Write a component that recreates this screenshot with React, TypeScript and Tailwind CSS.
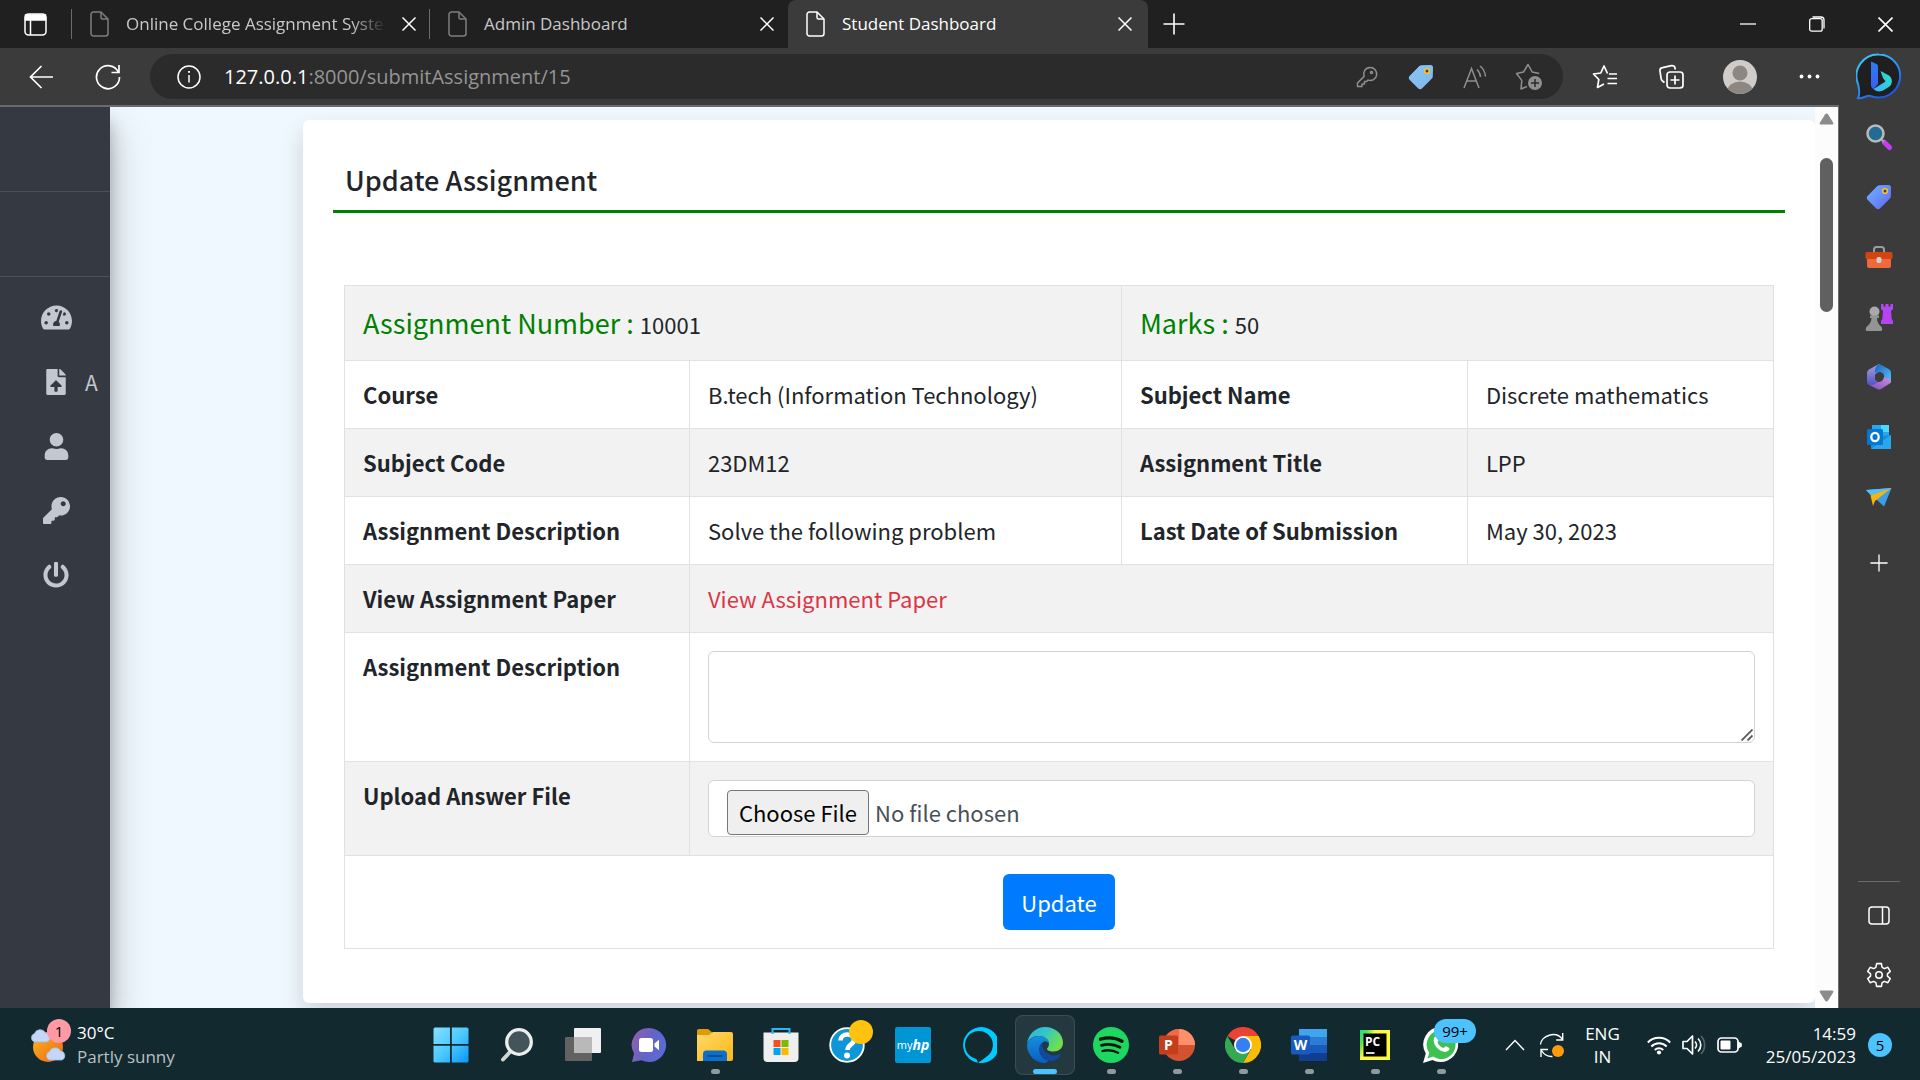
import React, { useId } from "react";
import { FaTachometerAlt, FaFileUpload, FaUser, FaKey, FaPowerOff } from "react-icons/fa";

type Children = { children?: React.ReactNode };

/* ---------- browser icons ---------- */

function DocIcon() {
  return (
    <svg width="20" height="26" viewBox="0 0 20 26" fill="none" stroke="currentColor" strokeWidth="1.5" strokeLinejoin="round">
      <path d="M3 1h8l7 7v14.500a2.500 2.500 0 0 1-2.500 2.500H3.500A2.500 2.500 0 0 1 1 22.500V3.500A2.500 2.500 0 0 1 3.500 1z" />
      <path d="M11 1v5.500A1.500 1.500 0 0 0 12.500 8H18" />
    </svg>
  );
}

function CrossIcon({ size = 14 }: { size?: number }) {
  return (
    <svg width={size} height={size} viewBox="0 0 14 14" stroke="currentColor" strokeWidth="1.5" fill="none">
      <path d="M.5.5l13 13M13.500.5l-13 13" />
    </svg>
  );
}

function PlusIcon({ size = 22 }: { size?: number }) {
  return (
    <svg width={size} height={size} viewBox="0 0 22 22" stroke="currentColor" strokeWidth="1.600" fill="none">
      <path d="M11 .5v21M.5 11h21" />
    </svg>
  );
}

function TagIcon({ from, to }: { from: string; to: string }) {
  const id = useId();
  return (
    <svg width="26" height="26" viewBox="0 0 26 26">
      <defs>
        <linearGradient id={id} x1="0" y1="0" x2="1" y2="1">
          <stop offset="0" stopColor={from} />
          <stop offset="1" stopColor={to} />
        </linearGradient>
      </defs>
      <path d="M13.500 1.200 22.500 1a2.500 2.500 0 0 1 2.500 2.500l-.2 9a3 3 0 0 1-.9 2.100L14.200 24.200a3 3 0 0 1-4.200 0L1.800 16a3 3 0 0 1 0-4.200l9.600-9.700a3 3 0 0 1 2.100-.9z" fill={`url(#${id})`} />
      <circle cx="19" cy="7" r="2.300" fill="#3a3f6b" stroke="#ffc41a" strokeWidth="1.600" />
    </svg>
  );
}

function BingIcon() {
  return (
    <svg width="46" height="48" viewBox="0 0 46 48">
      <defs>
        <linearGradient id="bing-ring" x1="0" y1="0" x2="0.600" y2="1">
          <stop offset="0" stopColor="#35d6f5" />
          <stop offset=".5" stopColor="#2f9bf3" />
          <stop offset="1" stopColor="#1b57e8" />
        </linearGradient>
        <linearGradient id="bing-stem" x1="0" y1="0" x2="0" y2="1">
          <stop offset="0" stopColor="#2c7df5" />
          <stop offset="1" stopColor="#3c5df0" />
        </linearGradient>
        <linearGradient id="bing-bowl" x1="1" y1="0" x2="0" y2="1">
          <stop offset="0" stopColor="#2fe0c4" />
          <stop offset="1" stopColor="#36b4ff" />
        </linearGradient>
      </defs>
      <path d="M23 1.500a21.500 21.500 0 1 1-8 41.600c-4-1.500-8 2.800-13 2.200 2.500-5 1-8.500.2-14A21.500 21.500 0 0 1 23 1.500z" fill="#1f1f1f" stroke="url(#bing-ring)" strokeWidth="2" />
      <path d="M15 8.500l5.500 2.500c1 .5 1.500 1.200 1.500 2.500V31l-4.500 5c-1.500-.5-2.500-2-2.500-4z" fill="url(#bing-stem)" />
      <path d="M24.500 18l8.500 4.500c4 3 3.500 8.500.5 11l-6 3.700c-3 1.700-7.500 1.800-10-1.200l12-7.500-2.500-3.500z" fill="url(#bing-bowl)" />
    </svg>
  );
}

function AvatarIcon() {
  return (
    <svg width="34" height="34" viewBox="0 0 34 34">
      <clipPath id="avatar-clip"><circle cx="17" cy="17" r="17" /></clipPath>
      <g clipPath="url(#avatar-clip)">
        <rect width="34" height="34" fill="#cfccc9" />
        <circle cx="17" cy="13" r="7.500" fill="#8c8783" />
        <ellipse cx="17" cy="31" rx="12.500" ry="9.500" fill="#8c8783" />
      </g>
    </svg>
  );
}

/* ---------- frame parts ---------- */

function Tab({ title, active, fade }: { title: string; active?: boolean; fade?: boolean }) {
  return (
    <div
      className={
        active
          ? "flex h-full w-[360px] items-center rounded-t-lg bg-[#3b3b3b] pr-4 pl-[18px] text-white"
          : "flex h-full w-[358px] items-center pr-[14px] pl-[18px] text-[#7e7e7e]"
      }
    >
      <DocIcon />
      <a
        href="#tab"
        className={
          active
            ? "mx-4 flex-1 text-[17px] leading-6 whitespace-nowrap text-white"
            : fade
              ? "mr-2 ml-4 flex-1 [mask-image:linear-gradient(to_right,black_84%,transparent_97%)] text-[17px] leading-6 whitespace-nowrap text-[#c8c8c8]"
              : "mx-4 flex-1 text-[17px] leading-6 whitespace-nowrap text-[#c8c8c8]"
        }
      >
        {title}
      </a>
      <button aria-label={`Close ${title}`} className="text-white"><CrossIcon /></button>
    </div>
  );
}

function TabStrip() {
  return (
    <div className="flex h-12 items-center bg-[#202020]">
      <button aria-label="Tab actions" className="flex w-[71px] justify-center text-white">
        <svg width="23" height="23" viewBox="0 0 23 23" fill="none" stroke="currentColor" strokeWidth="1.500">
          <rect x="1" y="1" width="21" height="21" rx="3.500" />
          <path d="M1.500 2h20v5h-20z" fill="currentColor" />
          <path d="M6.500 7v15" />
        </svg>
      </button>
      <span className="h-[30px] w-px bg-[#6b6b6b]" />
      <Tab title="Online College Assignment Syste" fade />
      <span className="-ml-px h-[30px] w-px bg-[#6b6b6b]" />
      <Tab title="Admin Dashboard" />
      <Tab title="Student Dashboard" active />
      <button aria-label="New tab" className="ml-[15px] text-white"><PlusIcon /></button>
      <div className="ml-auto flex h-full text-white">
        <button aria-label="Minimize" className="flex w-[69px] items-center justify-center">
          <svg width="16" height="16" viewBox="0 0 16 16" stroke="currentColor" strokeWidth="1.300"><path d="M0 8h16" /></svg>
        </button>
        <button aria-label="Restore" className="flex w-[69px] items-center justify-center">
          <svg width="16" height="16" viewBox="0 0 16 16" fill="none" stroke="currentColor" strokeWidth="1.300">
            <rect x=".7" y="2.700" width="12.500" height="12.500" rx="2" />
            <path d="M3.500 1h8.500a3 3 0 0 1 3 3v8.500" />
          </svg>
        </button>
        <button aria-label="Close window" className="flex w-[69px] items-center justify-center"><CrossIcon size={15} /></button>
      </div>
    </div>
  );
}

function AddressBar() {
  return (
    <div className="flex h-[57px] items-center bg-[#3b3b3b] text-white">
      <button aria-label="Back" className="ml-[29px]">
        <svg width="25" height="24" viewBox="0 0 25 24" fill="none" stroke="currentColor" strokeWidth="1.700"><path d="M12.500 1 1.500 12l11 11M1.500 12H24" /></svg>
      </button>
      <button aria-label="Refresh" className="ml-[41px]">
        <svg width="26" height="26" viewBox="0 0 26 26" fill="none" stroke="currentColor" strokeWidth="1.700">
          <path d="M23.500 8.500A11.500 11.500 0 1 0 24.500 13" />
          <path d="M24 1v7.500h-7.500" />
        </svg>
      </button>
      <div className="ml-[29px] flex h-[45px] flex-1 items-center rounded-full bg-[#2b2b2b] pr-[7px] pl-[27px] text-[#8f8f8f]">
        <svg width="24" height="24" viewBox="0 0 24 24" fill="none" stroke="white" strokeWidth="1.500">
          <circle cx="12" cy="12" r="11" /><path d="M12 10v7.500" /><path d="M12 6v1.800" strokeWidth="1.900" />
        </svg>
        <a href="#address" className="ml-[23px] flex-1 text-[20px] leading-7 text-[#949494]">
          <span className="text-white">127.0.0.1</span>:8000/submitAssignment/15
        </a>
        <div className="flex items-center">
          <button aria-label="Saved password" className="flex w-[54px] justify-center">
            <svg width="22" height="22" viewBox="0 0 22 22" fill="none" stroke="currentColor" strokeWidth="1.500" strokeLinejoin="round">
              <path d="M14 1.500a6.500 6.500 0 1 1-2 12.600l-1.500 1.400H8.500V18H6v2.500H1.500V17l6.600-6.600A6.500 6.500 0 0 1 14 1.500z" /><circle cx="15.500" cy="6.500" r="1" />
            </svg>
          </button>
          <button aria-label="Shopping" className="flex w-[54px] justify-center"><TagIcon from="#8cc5f5" to="#7db6ea" /></button>
          <button aria-label="Read aloud" className="flex w-[54px] justify-center">
            <svg width="24" height="24" viewBox="0 0 24 24" fill="none" stroke="currentColor" strokeWidth="1.500">
              <path d="M1 23 8.500 3.500 16 23M3.700 16h9.600" /><path d="M14 4.500a11 11 0 0 1 3.500 7.500M17 1a15 15 0 0 1 5.500 10.500" />
            </svg>
          </button>
          <button aria-label="Add to favorites" className="flex w-[54px] justify-center">
            <svg width="28" height="28" viewBox="0 0 28 28" fill="none" stroke="currentColor" strokeWidth="1.500" strokeLinejoin="round">
              <path d="M12 24.500 6 27l.8-8.600L1.500 11.500l7-1.500L13 2.500l4.200 7.500 7 1.500" transform="translate(0 -1)" />
              <circle cx="20" cy="20" r="7" fill="currentColor" stroke="none" /><path d="M20 16v8M16 20h8" stroke="#2b2b2b" />
            </svg>
          </button>
        </div>
      </div>
      <div className="ml-2 flex items-center">
        <button aria-label="Favorites" className="flex w-[67px] justify-center">
          <svg width="25" height="24" viewBox="0 0 25 24" fill="none" stroke="currentColor" strokeWidth="1.700" strokeLinejoin="round">
            <path d="M15.500 8.500 12 1 8.800 8 1.500 9l5.300 5.500L5.500 22.500 12 19" /><path d="M17 9h8M15.500 13.500H25M15.500 18.500H25" />
          </svg>
        </button>
        <button aria-label="Collections" className="flex w-[67px] justify-center">
          <svg width="25" height="25" viewBox="0 0 25 25" fill="none" stroke="currentColor" strokeWidth="1.700">
            <rect x="8" y="8" width="16" height="16" rx="3" /><path d="M16 11.500v9M11.500 16h9" />
            <path d="M5.500 18.500 3.500 17a4 4 0 0 1-1.400-2.400L1 7a3 3 0 0 1 2.500-3.400l9-2A3 3 0 0 1 16 4l.3 1.500" />
          </svg>
        </button>
        <button aria-label="Profile" className="flex w-[69px] justify-center"><AvatarIcon /></button>
        <button aria-label="Settings and more" className="flex w-[70px] justify-center">
          <svg width="21" height="5" viewBox="0 0 21 5" fill="currentColor"><circle cx="2.500" cy="2.500" r="1.900" /><circle cx="10.500" cy="2.500" r="1.900" /><circle cx="18.500" cy="2.500" r="1.900" /></svg>
        </button>
        <button aria-label="Discover" className="mr-[18px] ml-3"><BingIcon /></button>
      </div>
    </div>
  );
}

function RailButton({ label, children }: { label: string } & Children) {
  return <button aria-label={label} className="flex h-[60px] w-full items-center justify-center">{children}</button>;
}

function EdgeRail() {
  return (
    <aside className="flex w-[82px] flex-col items-center border-l border-[#6b6b6b] bg-[#3b3b3b] pt-[2px] pr-[2px] text-white">
      <RailButton label="Search">
        <svg width="28" height="28" viewBox="0 0 28 28">
          <path d="M19.500 19.500l5 5" stroke="#c63cf5" strokeWidth="5" strokeLinecap="round" /><path d="M16 16l3 3" stroke="#9b9b9b" strokeWidth="2.500" />
          <circle cx="10.500" cy="10.500" r="8" fill="#216b94" stroke="#b9b9b9" strokeWidth="2.500" />
        </svg>
      </RailButton>
      <RailButton label="Shopping"><TagIcon from="#6fb6ff" to="#6165f5" /></RailButton>
      <RailButton label="Tools">
        <svg width="28" height="24" viewBox="0 0 28 24">
          <path d="M9 7V4.500A2.500 2.500 0 0 1 11.500 2h5A2.500 2.500 0 0 1 19 4.500V7" fill="none" stroke="#9c9c9c" strokeWidth="2" />
          <path d="M2 11h24v10a2 2 0 0 1-2 2H4a2 2 0 0 1-2-2z" fill="#ee6a3d" />
          <rect x=".5" y="7" width="27" height="7" rx="1.500" fill="#d44413" /><rect x="11.500" y="12" width="5" height="6" rx="2" fill="#cfcfcf" />
        </svg>
      </RailButton>
      <RailButton label="Games">
        <svg width="28" height="28" viewBox="0 0 28 28">
          <path d="M16 1h2.500v2.500h2V1h3v2.500h2V1H28v5l-2 2 .7 8 1.300 2v3H16v-3l1.300-2 .7-8-2-2z" fill="#b545f2" />
          <circle cx="9.500" cy="8.500" r="5" fill="#a9a9a9" /><path d="M5 12.500h9v2.500h-2c0 4 1.500 6 3.500 8 2 1.200 2.500 5 .5 5H2c-2 0-1.500-3.800.5-5 2-2 4-4 4-8H5z" fill="#949494" />
        </svg>
      </RailButton>
      <RailButton label="Microsoft 365">
        <svg width="26" height="28" viewBox="0 0 26 28">
          <defs>
            <linearGradient id="m365-a" x1="0" y1="0" x2="0" y2="1"><stop offset="0" stopColor="#a8a0e8" /><stop offset="1" stopColor="#4848b8" /></linearGradient>
            <linearGradient id="m365-b" x1="0" y1="0" x2="1" y2="1"><stop offset="0" stopColor="#1d5fc0" /><stop offset="1" stopColor="#55c8f2" /></linearGradient>
            <linearGradient id="m365-c" x1="0" y1="1" x2="1" y2="0"><stop offset="0" stopColor="#7a54c0" /><stop offset="1" stopColor="#d28be0" /></linearGradient>
          </defs>
          <path d="M13 1 3 6.500Q1 7.700 1 10v9q0 2 2 3l6 3 3-6q-3-2-3-5 0-4 4-5z" fill="url(#m365-a)" />
          <path d="M13 1q-5 3-4 9l5-1q5 1 4 6l7 5V9.500Q25 7.500 23 6.300L15 1.700Q14 1 13 1z" fill="url(#m365-b)" />
          <path d="M25 17q0 3-2 4l-8 5q-2 1-4 0l-7-4q5 0 8-3 5 0 6-5z" fill="url(#m365-c)" />
          <path d="M13 9.500l4 2.300v4.600l-4 2.300-4-2.300v-4.600z" fill="#3b3b3b" />
        </svg>
      </RailButton>
      <RailButton label="Outlook">
        <svg width="26" height="26" viewBox="0 0 26 26">
          <path d="M6 1h17v13H6z" fill="#28a8ea" /><path d="M15 1h8v7h-8z" fill="#50d9ff" /><path d="M5 13l20-2v14H5z" fill="#1490df" /><path d="M5 25l20-14v14z" fill="#28a8ea" />
          <rect x="1" y="5" width="16" height="16" rx="1.500" fill="#0078d4" /><ellipse cx="9" cy="13" rx="3.700" ry="4.200" fill="none" stroke="white" strokeWidth="2.300" />
        </svg>
      </RailButton>
      <RailButton label="Drop">
        <svg width="28" height="22" viewBox="0 0 28 22">
          <path d="M1 4 26.500 2 19 20.500 12 14z" fill="#3d9fe8" /><path d="M1 4 26.500 2 6 9.500z" fill="#57bdf5" /><path d="M26.500 2 5.500 9.500 8 20l2-5z" fill="#f5b50f" />
        </svg>
      </RailButton>
      <button aria-label="Customize" className="mt-[27px]"><PlusIcon size={18} /></button>
      <div className="mt-auto h-px w-[42px] bg-[#6b6b6b]" />
      <button aria-label="Toggle sidebar" className="mt-6">
        <svg width="22" height="19" viewBox="0 0 22 19" fill="none" stroke="currentColor" strokeWidth="1.500"><rect x="1" y="1" width="20" height="17" rx="3" /><path d="M14.500 1v17" /></svg>
      </button>
      <button aria-label="Settings" className="mt-[37px] mb-5">
        <svg width="26" height="26" viewBox="0 0 24 24" fill="none" stroke="currentColor" strokeWidth="1.400" strokeLinejoin="round">
          <circle cx="12" cy="12" r="3" />
          <path d="M9.800 1.500h4.400l.7 3.400 2 1.200 3.300-1.200 2.200 3.800-2.600 2.300v2l2.600 2.300-2.200 3.800-3.300-1.200-2 1.200-.7 3.400H9.800l-.7-3.400-2-1.200-3.300 1.200-2.200-3.800L4.200 13v-2L1.600 8.700l2.200-3.800 3.300 1.200 2-1.200z" />
        </svg>
      </button>
    </aside>
  );
}

function Scrollbar() {
  return (
    <div className="flex w-[23px] shrink-0 flex-col items-center bg-[#fcfcfc] py-[6px]">
      <svg width="15" height="12" viewBox="0 0 15 12" fill="#8b8b8b"><path d="M7.500.5q1 0 1.600 1l5 8q.9 2-1 2H2q-2 0-1-2l5-8q.6-1 1.500-1z" /></svg>
      <div className="mt-[33px] h-[154px] w-[13px] rounded-full bg-[#606060]" />
      <svg className="mt-auto" width="15" height="12" viewBox="0 0 15 12" fill="#8b8b8b"><path d="M7.500 11.500q1 0 1.600-1l5-8q.9-2-1-2H2q-2 0-1 2l5 8q.6 1 1.500 1z" /></svg>
    </div>
  );
}

/* ---------- web page ---------- */

function SideMenu() {
  return (
    <nav className="relative z-10 w-[110px] shrink-0 bg-[#353a42] text-[#c2c7d0] shadow-[0_21px_42px_rgba(0,0,0,0.25),0_15px_15px_rgba(0,0,0,0.22)]">
      <div className="h-[85px] border-b border-[#4b5058]" />
      <div className="h-[85px] border-b border-[#4b5058]" />
      <ul className="mt-2 flex flex-col">
        <li className="h-16"><a href="#dashboard" aria-label="Dashboard" className="flex h-full w-28 items-center justify-center"><FaTachometerAlt size={31} /></a></li>
        <li className="h-[65px]">
          <a href="#assignment" className="flex h-full items-center pl-[43px]">
            <FaFileUpload size={26} />
            <span className="ml-4 text-[21px] leading-8">A</span>
          </a>
        </li>
        <li className="h-16"><a href="#profile" aria-label="Profile" className="flex h-full w-28 items-center justify-center"><FaUser size={27} /></a></li>
        <li className="h-[65px]"><a href="#password" aria-label="Change password" className="flex h-full w-28 items-center justify-center"><FaKey size={27} /></a></li>
        <li className="h-16"><a href="#logout" aria-label="Log out" className="flex h-full w-28 items-center justify-center"><FaPowerOff size={26} /></a></li>
      </ul>
    </nav>
  );
}

function Cell({ children, span }: { span?: number } & Children) {
  return <td colSpan={span} className="border border-[#dee2e6] p-[18px] align-top leading-[31px]">{children}</td>;
}

function Head({ children }: Children) {
  return <th scope="row" className="border border-[#dee2e6] p-[18px] text-left align-top leading-[31px] font-bold">{children}</th>;
}

function Summary({ label, value }: { label: string; value: string }) {
  return (
    <td colSpan={2} className="border border-[#dee2e6] p-[18px] leading-none">
      <p className="flex h-[38px] items-baseline leading-[38px] whitespace-pre">
        <span className="text-[27px] text-[#008000]">{label} : </span>
        <span>{value}</span>
      </p>
    </td>
  );
}

const details = [
  ["Course", "B.tech (Information Technology)", "Subject Name", "Discrete mathematics"],
  ["Subject Code", "23DM12", "Assignment Title", "LPP"],
  ["Assignment Description", "Solve the following problem", "Last Date of Submission", "May 30, 2023"],
];

function AssignmentForm() {
  return (
    <form className="rounded-md bg-white pt-9 pb-[54px] shadow-[0_12px_24px_rgba(0,0,0,0.15)]" onSubmit={(e) => e.preventDefault()}>
      <h1 className="mx-[30px] border-b-3 border-[#008000] pb-[6px] pl-3 text-[27px] leading-[48px] font-medium">Update Assignment</h1>
      <div className="mx-[41px] mt-[72px]">
        <table className="w-full table-fixed border-collapse border border-[#dee2e6]">
          <colgroup>
            <col className="w-[24.14%]" />
            <col className="w-[30.23%]" />
            <col className="w-[24.21%]" />
            <col />
          </colgroup>
          <tbody className="[&>tr:nth-child(odd)]:bg-[#f2f2f2]">
            <tr>
              <Summary label="Assignment Number" value="10001" />
              <Summary label="Marks" value="50" />
            </tr>
            {details.map((row) => (
              <tr key={row[0]}>
                <Head>{row[0]}</Head>
                <Cell>{row[1]}</Cell>
                <Head>{row[2]}</Head>
                <Cell>{row[3]}</Cell>
              </tr>
            ))}
            <tr>
              <Head>View Assignment Paper</Head>
              <Cell span={3}><a href="#paper" className="text-[#dc3545]">View Assignment Paper</a></Cell>
            </tr>
            <tr>
              <Head><label htmlFor="description">Assignment Description</label></Head>
              <Cell span={3}>
                <div className="relative">
                  <textarea id="description" className="block h-[92px] w-full resize-none rounded-md border border-[#ced4da] bg-white px-[18px] py-2" />
                  <svg className="pointer-events-none absolute right-[2px] bottom-[2px]" width="12" height="12" viewBox="0 0 12 12" stroke="#5a5a5a" strokeWidth="1.800"><path d="M.5 11.500l11-11M6.500 11.500l5-5" /></svg>
                </div>
              </Cell>
            </tr>
            <tr>
              <Head><label htmlFor="answer">Upload Answer File</label></Head>
              <Cell span={3}>
                <input
                  id="answer"
                  type="file"
                  className="block h-[57px] w-full rounded-md border border-[#ced4da] bg-white px-[18px] pt-[9px] text-[#495057] file:mr-[6px] file:h-[45px] file:rounded-[4px] file:border file:border-solid file:border-[#767676] file:bg-[#efefef] file:px-[11px] file:text-black"
                />
              </Cell>
            </tr>
            <tr>
              <Cell span={4}><button className="mx-auto block h-14 rounded-md bg-[#007bff] px-[18px] text-white">Update</button></Cell>
            </tr>
          </tbody>
        </table>
      </div>
    </form>
  );
}

/* ---------- taskbar ---------- */

function TaskbarApp({ label, running, active, children }: { label: string; running?: boolean; active?: boolean } & Children) {
  return (
    <button aria-label={label} className="relative flex w-[66px] items-center justify-center">
      {active && <span className="absolute inset-x-[3px] inset-y-[5px] rounded-lg border border-white/10 bg-white/8" />}
      <span className="relative">{children}</span>
      {running && <span className="absolute bottom-[6px] h-[5px] w-[9px] rounded-full bg-[#8f9a9d]" />}
      {active && <span className="absolute bottom-[6px] h-[5px] w-6 rounded-full bg-[#4cc2ff]" />}
    </button>
  );
}

function Cloud({ x, y }: { x: number; y: number }) {
  return <path transform={`translate(${x} ${y})`} d="M4.500 13a4.500 4.500 0 0 1 0-8.500A6 6 0 0 1 15.500 4 4.700 4.700 0 0 1 17 13z" fill="#c5d6f7" stroke="#9db8ea" strokeWidth=".8" />;
}

function PinnedApps() {
  return (
    <div className="flex">
      <TaskbarApp label="Start">
        <svg width="36" height="36" viewBox="0 0 36 36">
          <defs><linearGradient id="win" gradientUnits="userSpaceOnUse" x1="0" y1="0" x2="36" y2="36"><stop offset="0" stopColor="#8be0ff" /><stop offset=".5" stopColor="#4ccafe" /><stop offset="1" stopColor="#0a94fb" /></linearGradient></defs>
          <path d="M.5 2A1.500 1.500 0 0 1 2 .5h15v16.500H.5zM18.800.5H34A1.500 1.500 0 0 1 35.500 2v15H18.800zM.5 18.800H17v16.700H2A1.500 1.500 0 0 1 .5 34zM18.800 18.800h16.700V34a1.500 1.500 0 0 1-1.500 1.500H18.800z" fill="url(#win)" />
        </svg>
      </TaskbarApp>
      <TaskbarApp label="Search">
        <svg width="34" height="36" viewBox="0 0 34 36"><path d="M10 25 3 32.500" stroke="#d0d4d5" strokeWidth="4" strokeLinecap="round" /><circle cx="19" cy="15" r="12.300" fill="#43555a" stroke="#eceeee" strokeWidth="3.300" /></svg>
      </TaskbarApp>
      <TaskbarApp label="Task view">
        <svg width="36" height="36" viewBox="0 0 36 36"><rect y="10" width="27" height="24" rx="1" fill="#626262" /><rect x="9" y="1" width="27" height="25" rx="1" fill="#f0f0f0" /><path d="M9 10h18v16H9z" fill="#b9b9b9" /></svg>
      </TaskbarApp>
      <TaskbarApp label="Chat">
        <svg width="36" height="36" viewBox="0 0 36 36">
          <defs><linearGradient id="chat" x1="0" y1=".3" x2="1" y2=".7"><stop offset="0" stopColor="#8f5fb0" /><stop offset=".5" stopColor="#6264c7" /><stop offset="1" stopColor="#5b6bd6" /></linearGradient></defs>
          <path d="M18 1a17 17 0 1 1-7.500 32.200L1 35l2-8.500A17 17 0 0 1 18 1z" fill="url(#chat)" /><rect x="8" y="11" width="14" height="14" rx="2.500" fill="white" /><path d="M23.500 16.500 28 12.800v10.500l-4.500-3.800z" fill="white" />
        </svg>
      </TaskbarApp>
      <TaskbarApp label="File Explorer" running>
        <svg width="36" height="36" viewBox="0 0 36 36">
          <defs><linearGradient id="folder" x1="0" y1="0" x2="1" y2="1"><stop offset="0" stopColor="#ffd86b" /><stop offset="1" stopColor="#fbb816" /></linearGradient></defs>
          <path d="M0 4a2 2 0 0 1 2-2h9l5 4v8H0z" fill="#e09a05" /><path d="M0 8h12l4-3h18a2 2 0 0 1 2 2v25a2 2 0 0 1-2 2H0z" fill="url(#folder)" />
          <path d="M6 34V27a3.500 3.500 0 0 1 3.500-3.500h17A3.500 3.500 0 0 1 30 27v7z" fill="#0d6fc9" /><path d="M10.500 29h15" stroke="#084a8c" strokeWidth="1.600" />
        </svg>
      </TaskbarApp>
      <TaskbarApp label="Microsoft Store">
        <svg width="36" height="36" viewBox="0 0 36 36">
          <path d="M.5 5.500h35V31a4 4 0 0 1-4 4h-27a4 4 0 0 1-4-4z" fill="#efefef" /><path d="M9.500 7V2h17v5" fill="none" stroke="#2eb6f0" strokeWidth="2" />
          <path d="M10.500 13h7v7h-7z" fill="#f25022" /><path d="M18.500 13h7v7h-7z" fill="#7fba00" /><path d="M10.500 21h7v7h-7z" fill="#00a4ef" /><path d="M18.500 21h7v7h-7z" fill="#ffb900" />
        </svg>
      </TaskbarApp>
      <TaskbarApp label="HP Support Assistant">
        <svg className="overflow-visible" width="36" height="36" viewBox="0 0 36 36">
          <circle cx="18" cy="18" r="16.800" fill="#0f96d6" stroke="white" strokeWidth="1.800" />
          <path d="M11.500 13.500c0-8 13.500-8 13.500-.8 0 5-6.500 4.500-6.500 10.300" fill="none" stroke="white" strokeWidth="4.500" /><circle cx="18" cy="28.500" r="3" fill="white" /><circle cx="32" cy="5" r="12" fill="#ffc20e" />
        </svg>
      </TaskbarApp>
      <TaskbarApp label="myHP">
        <span className="flex h-9 w-9 items-center justify-center rounded-xs bg-[#0096d6] text-[11px] leading-4 text-white">my<i className="text-[14px] font-bold">hp</i></span>
      </TaskbarApp>
      <TaskbarApp label="Alexa">
        <svg width="36" height="36" viewBox="0 0 36 36"><path d="M17 35.800A18 18 0 1 1 18.500 36C15.500 36 22 33 25 30A14 14 0 1 0 13.500 31.200c1.800.6 2.500 1.300 2.700 2.500z" fill="#00caff" /></svg>
      </TaskbarApp>
      <TaskbarApp label="Microsoft Edge" active>
        <svg width="36" height="36" viewBox="0 0 36 36">
          <defs>
            <linearGradient id="edge-top" x1="0" y1="0" x2="1" y2=".5"><stop offset="0" stopColor="#2bb0e8" /><stop offset=".5" stopColor="#34c6c4" /><stop offset="1" stopColor="#6fe04a" /></linearGradient>
            <linearGradient id="edge-low" x1="0" y1="0" x2="0" y2="1"><stop offset="0" stopColor="#1490df" /><stop offset="1" stopColor="#0a5fc0" /></linearGradient>
          </defs>
          <path d="M0 17C1 7 9 0 18 0c10 0 18 7 18 15.500 0 6-4.500 9-9.500 9-4 0-6.500-1.200-6.500-2.500 0-1 2-2 2-5 0-5-5-8-10-8C6 9 1.500 12 0 17z" fill="url(#edge-top)" />
          <path d="M0 18C1 13 6 9 12 9c5.500 0 10 3.500 10 8-1.500-2.500-4-3.500-6-2-5 4-2 13 6 18-1.500 2-3 3-4 3C8 36 0 28 0 18z" fill="url(#edge-low)" />
          <path d="M15 16c-6 4-3 20 12 17.800 3-1.300 5-3.300 6.500-5.600.5-.9-.3-1.500-1.200-1-8 3.500-17-.7-17.300-11.200z" fill="#1148a0" />
        </svg>
      </TaskbarApp>
      <TaskbarApp label="Spotify" running>
        <svg width="36" height="36" viewBox="0 0 36 36"><circle cx="18" cy="18" r="18" fill="#1ed760" /><g fill="none" stroke="#10150f" strokeLinecap="round"><path d="M7.500 12.200c7-2 15.500-1.400 21.500 2" strokeWidth="3.400" /><path d="M8.500 18.300c6-1.600 13-1 18.500 2" strokeWidth="2.800" /><path d="M9.500 24c5-1.300 10.500-.8 15.500 1.800" strokeWidth="2.300" /></g></svg>
      </TaskbarApp>
      <TaskbarApp label="PowerPoint" running>
        <svg width="36" height="36" viewBox="0 0 36 36"><circle cx="20" cy="18" r="16" fill="#d35230" /><path d="M20 2v16H4A16 16 0 0 1 20 2z" fill="#ed6c47" /><path d="M20 2a16 16 0 0 1 16 16H20z" fill="#ff8f6b" /><rect y="8.500" width="19" height="19" rx="1.500" fill="#c43e1c" /><text x="9.500" y="23" textAnchor="middle" fill="white" fontSize="14" fontWeight="700">P</text></svg>
      </TaskbarApp>
      <TaskbarApp label="Chrome" running>
        <svg width="36" height="36" viewBox="0 0 36 36"><path d="M18 18 2.400 9A18 18 0 0 1 33.600 9z" fill="#ea4335" /><path d="M18 9h15.600A18 18 0 0 1 18 36l7.800-13.500z" fill="#fbbc05" /><path d="M2.400 9l7.800 13.500L18 27l7.800-4.500L18 36A18 18 0 0 1 2.400 9z" fill="#34a853" /><circle cx="18" cy="18" r="9" fill="white" /><circle cx="18" cy="18" r="7.200" fill="#3480f0" /></svg>
      </TaskbarApp>
      <TaskbarApp label="Word" running>
        <svg width="36" height="36" viewBox="0 0 36 36"><path d="M8 2h28v8H8z" fill="#41a5ee" /><path d="M8 10h28v8H8z" fill="#2b7cd3" /><path d="M8 18h28v8H8z" fill="#185abd" /><path d="M8 26h28v8H8z" fill="#103f91" /><rect y="8.500" width="19" height="19" rx="1.500" fill="#185abd" /><text x="9.500" y="23" textAnchor="middle" fill="white" fontSize="14" fontWeight="700">W</text></svg>
      </TaskbarApp>
      <TaskbarApp label="PyCharm" running>
        <svg width="30" height="30" viewBox="0 0 30 30"><defs><linearGradient id="pc" x1="0" y1="0" x2=".6" y2=".3"><stop offset="0" stopColor="#21d789" /><stop offset=".35" stopColor="#5be04a" /><stop offset=".7" stopColor="#fcf84a" /></linearGradient></defs><path d="M0 0h30v30H0z" fill="url(#pc)" /><path d="M3.500 3.500h23v23h-23z" fill="#000" /><text x="5" y="15.500" fill="white" fontSize="12" fontWeight="700">PC</text><path d="M6 23h8.500" stroke="white" strokeWidth="1.700" /></svg>
      </TaskbarApp>
      <TaskbarApp label="WhatsApp" running>
        <svg width="36" height="36" viewBox="0 0 36 36"><path d="M18 0a17.500 17.500 0 1 1-8.500 33L0 36l2.800-9.500A17.500 17.500 0 0 1 18 0z" fill="white" /><path d="M18 3.200A14.400 14.400 0 1 1 10.200 29.600L4.500 31.500l1.800-5.700A14.400 14.400 0 0 1 18 3.200z" fill="#3dc251" /><path d="M11 11c2-3 3.500-1 4.500 1.500.5 1.500-1 2.300-1 3 1.300 3 3.300 4.500 6 5.500.8 0 1.500-2 2.500-1.700 2.500 1 5 2 2.300 4.500C20.500 28 8.500 19.500 11 11z" fill="white" /></svg>
        <span className="absolute -top-[8px] left-[11px] flex h-6 w-[42px] items-center justify-center rounded-full bg-[#4cc2ff] text-[15px] leading-6 text-black">99+</span>
      </TaskbarApp>
    </div>
  );
}

function Taskbar() {
  return (
    <footer className="grid h-[72px] shrink-0 grid-cols-[1fr_auto_1fr] bg-[#12292f] pt-[2px] pr-7 text-white">
      <button className="flex items-center pl-[30px] text-left">
        <span className="relative">
          <svg width="40" height="42" viewBox="0 0 40 42"><defs><linearGradient id="sun" x1="0" y1="0" x2="1" y2="1"><stop offset="0" stopColor="#f9b825" /><stop offset="1" stopColor="#f1640f" /></linearGradient></defs><circle cx="18" cy="23" r="15" fill="url(#sun)" /><Cloud x={0} y={5} /><Cloud x={15} y={23} /></svg>
          <span className="absolute -top-[5px] left-[17px] flex h-6 w-6 items-center justify-center rounded-full bg-[#ff99a4] text-[15px] leading-6 text-black">1</span>
        </span>
        <span className="ml-[7px] flex flex-col text-[17px] leading-6"><span>30°C</span><span className="text-[#b9c1c3]">Partly sunny</span></span>
      </button>
      <PinnedApps />
      <div className="flex items-center justify-end text-[17px] leading-[23px]">
        <button aria-label="Hidden icons"><svg width="20" height="12" viewBox="0 0 20 12" fill="none" stroke="currentColor" strokeWidth="1.400"><path d="M1 11l9-9.500 9 9.500" /></svg></button>
        <button aria-label="Update status" className="ml-[14px]">
          <svg width="26" height="26" viewBox="0 0 26 26" fill="none" stroke="currentColor" strokeWidth="1.400"><path d="M1.500 12.500C2 4 17 -2 23.500 7.500M23.700 1v7h-6.500M2 25v-7.500h7M2.500 18.500q4 6.500 11 6" /><circle cx="19" cy="19" r="6" fill="#ff9a0a" stroke="none" /></svg>
        </button>
        <button className="ml-5 text-center">ENG<br />IN</button>
        <button aria-label="Network, volume and battery" className="ml-[27px] flex items-center gap-[11px]">
          <svg width="24" height="20" viewBox="0 0 24 20" fill="none" stroke="currentColor" strokeWidth="1.900"><path d="M.8 7.500a15.500 15.500 0 0 1 22.400 0M4.300 11.500a10.800 10.800 0 0 1 15.400 0M7.800 15a6 6 0 0 1 8.400 0" /><circle cx="12" cy="17.500" r="2.100" fill="currentColor" stroke="none" /></svg>
          <svg width="24" height="22" viewBox="0 0 24 22" fill="none" stroke="currentColor" strokeWidth="1.700"><path d="M1 7.500h4L10.500 2v18L5 14.500H1z" strokeLinejoin="round" /><path d="M13 7.500a5 5 0 0 1 0 7M16 4.500a9 9 0 0 1 0 13" /><path d="M19 2a13 13 0 0 1 0 18" stroke="#536468" /></svg>
          <svg width="25" height="18" viewBox="0 0 25 18" fill="none" stroke="currentColor" strokeWidth="1.700"><rect x="1" y="2" width="20" height="14" rx="3.500" /><rect x="3.500" y="4.500" width="10" height="9" rx="1" fill="currentColor" stroke="none" /><path d="M21.500 6.500 24 8v2l-2.500 1.500z" fill="currentColor" /></svg>
        </button>
        <button className="ml-6 text-right">14:59<br />25/05/2023</button>
        <button className="ml-3 flex h-6 w-6 items-center justify-center rounded-full bg-[#4cc2ff] text-[15px] leading-6 text-black">5</button>
      </div>
    </footer>
  );
}

export default function App() {
  return (
    <div className="flex h-screen flex-col overflow-hidden font-['Open_Sans',sans-serif]">
      <header className="shrink-0">
        <TabStrip />
        <AddressBar />
      </header>
      <div className="flex min-h-0 flex-1 bg-[#3b3b3b]">
        <div className="flex min-w-0 flex-1 overflow-hidden border-t-2 border-[#6b6b6b] bg-[#f0f8ff] font-['Noto_Sans_CJK_SC',sans-serif] text-[22px] text-[#212529]">
          <SideMenu />
          <main className="min-w-0 flex-1 overflow-hidden pt-[13px] pl-[193px]">
            <AssignmentForm />
          </main>
          <Scrollbar />
        </div>
        <EdgeRail />
      </div>
      <Taskbar />
    </div>
  );
}
